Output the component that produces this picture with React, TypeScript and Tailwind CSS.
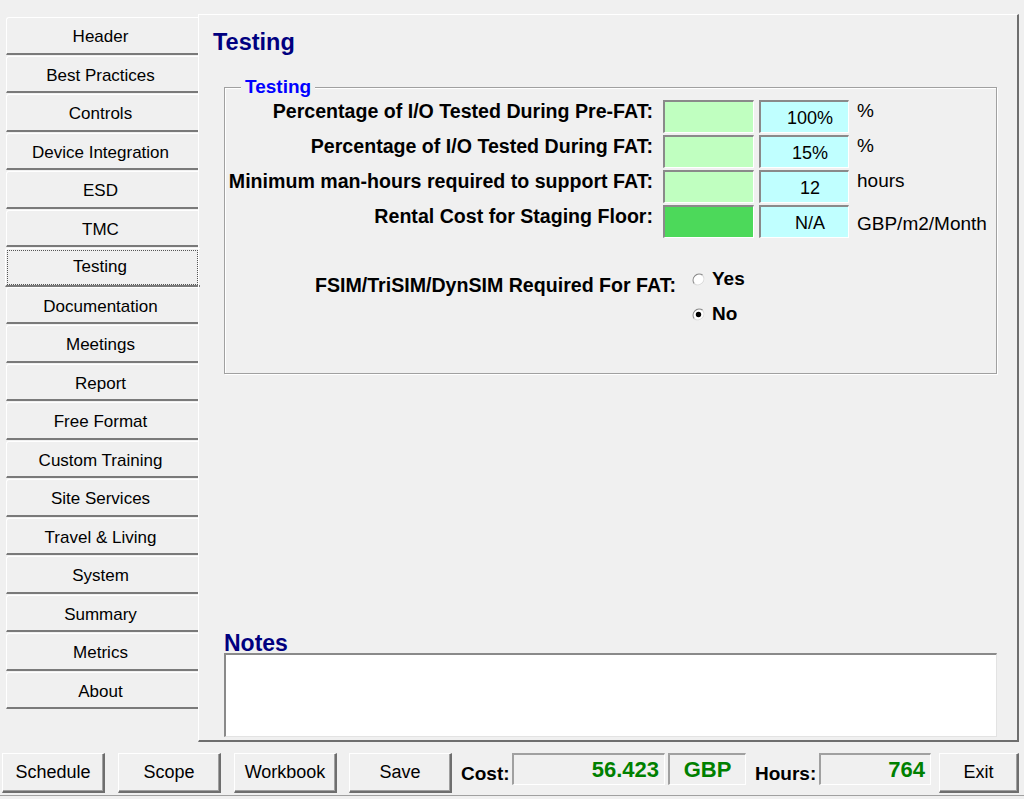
import React from "react";

const tabs = [
  "Header",
  "Best Practices",
  "Controls",
  "Device Integration",
  "ESD",
  "TMC",
  "Testing",
  "Documentation",
  "Meetings",
  "Report",
  "Free Format",
  "Custom Training",
  "Site Services",
  "Travel & Living",
  "System",
  "Summary",
  "Metrics",
  "About",
];

const rows = [
  { label: "Percentage of I/O Tested During Pre-FAT:", dark: false, value: "100%", unit: "%", center: false },
  { label: "Percentage of I/O Tested During FAT:", dark: false, value: "15%", unit: "%", center: false },
  { label: "Minimum man-hours required to support FAT:", dark: false, value: "12", unit: "hours", center: false },
  { label: "Rental Cost for Staging Floor:", dark: true, value: "N/A", unit: "GBP/m2/Month", center: true },
];

function Radio({ checked }: { checked: boolean }) {
  return (
    <svg width="13" height="13" viewBox="0 0 13 13" className="shrink-0">
      <circle cx="6.5" cy="6.5" r="6" fill="#ffffff" />
      <path d="M2.3 10.7 A6 6 0 0 1 10.7 2.3" fill="none" stroke="#8c8c8c" strokeWidth="1.2" />
      <path d="M10.7 2.3 A6 6 0 0 1 2.3 10.7" fill="none" stroke="#dcdcdc" strokeWidth="1.2" />
      {checked && <circle cx="6.5" cy="6.5" r="2.7" fill="#000000" />}
    </svg>
  );
}

function Btn({ label, w, ml }: { label: string; w: string; ml: string }) {
  return (
    <div
      className={`${w} ${ml} h-[40px] shrink-0 flex items-center justify-center border-t border-l border-t-white border-l-white border-r-2 border-b-2 border-r-[#6e6e6e] border-b-[#6e6e6e] bg-[#f0f0f0] text-[18px] text-black shadow-[inset_-1px_-1px_0_#a0a0a0]`}
    >
      {label}
    </div>
  );
}

export default function App() {
  return (
    <div
      className="w-[1024px] h-[799px] bg-[#f0f0f0] flex flex-col overflow-hidden text-black"
      style={{ fontFamily: '"Liberation Sans", Arial, sans-serif' }}
    >
      <div className="flex h-[742px] shrink-0">
        {/* Sidebar */}
        <div className="w-[192px] ml-[6px] pt-[17px] flex flex-col shrink-0">
          {tabs.map((t) => {
            const sel = t === "Testing";
            return (
              <div key={t} className="h-[38.5px] shrink-0 flex flex-col">
                <div
                  className={`flex-1 flex items-center justify-center border-t border-l border-t-white border-l-white rounded-tl-[3px] border-b-2 border-b-[#7a7a7a] text-[17px] ${
                    sel ? "-ml-px mr-[-2px] pt-[1px]" : ""
                  }`}
                >
                  {sel ? (
                    <div className="w-[191px] h-[35px] mr-[2px] border border-dotted border-[#555] flex items-center justify-center pr-[4px] pb-[2px]">
                      {t}
                    </div>
                  ) : (
                    <span className="pt-[3px] pr-[4px]">{t}</span>
                  )}
                </div>
                <div className="h-[1px] shrink-0" />
              </div>
            );
          })}
        </div>

        {/* Main panel */}
        <div className="mt-[14px] w-[821px] h-[728px] shrink-0 flex flex-col border-t border-l border-t-white border-l-white border-r-2 border-b-2 border-r-[#6e6e6e] border-b-[#6e6e6e]">
          <div className="mt-[14px] ml-[14px] h-[26px] leading-[26px] text-[23.5px] font-bold text-[#000080]">
            Testing
          </div>

          <div className="relative mt-[32px] ml-[25px] w-[773px] h-[287px] shrink-0 border border-[#a0a0a0] shadow-[inset_1px_1px_0_#ffffff,1px_1px_0_#ffffff]">
            <div className="absolute left-[16px] top-[-12px] px-[4px] bg-[#f0f0f0] text-[19px] leading-[22px] font-bold text-[#0000ff]">
              Testing
            </div>

            <div className="pt-[12px] flex flex-col gap-[2px]">
              {rows.map((r) => (
                <div key={r.label} className="flex h-[33px] items-start">
                  <div className="w-[428px] shrink-0 text-right text-[19.6px] leading-[22px] font-bold">
                    {r.label}
                  </div>
                  <div
                    className={`ml-[10px] w-[91px] h-[33px] shrink-0 border-t-2 border-l-2 border-t-[#8a8a8a] border-l-[#8a8a8a] border-r border-b border-r-white border-b-white ${
                      r.dark ? "bg-[#4cd95a]" : "bg-[#c0ffc0]"
                    }`}
                  />
                  <div className="ml-[5px] w-[90px] h-[33px] shrink-0 flex items-center justify-center pt-[3px] pl-[11px] border-t-2 border-l-2 border-t-[#8a8a8a] border-l-[#8a8a8a] border-r border-b border-r-white border-b-white bg-[#c0ffff] text-[18px]">
                    {r.value}
                  </div>
                  <div
                    className={`ml-[8px] text-[19px] leading-[22px] ${r.center ? "self-center pt-[4px]" : ""}`}
                  >
                    {r.unit}
                  </div>
                </div>
              ))}
            </div>

            <div className="mt-[30px] flex items-start">
              <div className="w-[451px] shrink-0 mt-[6px] text-right text-[19.6px] leading-[22px] font-bold">
                FSIM/TriSIM/DynSIM Required For FAT:
              </div>
              <div className="ml-[16px] flex flex-col gap-[13px]">
                <div className="flex items-center gap-[7px] h-[22px]">
                  <Radio checked={false} />
                  <span className="text-[19px] leading-[22px] font-bold">Yes</span>
                </div>
                <div className="flex items-center gap-[7px] h-[22px]">
                  <Radio checked={true} />
                  <span className="text-[19px] leading-[22px] font-bold">No</span>
                </div>
              </div>
            </div>
          </div>

          <div className="flex-1" />

          <div className="ml-[25px] h-[20px] leading-[20px] text-[23px] font-bold text-[#000080]">Notes</div>
          <div className="ml-[25px] mb-[3px] w-[773px] h-[84px] shrink-0 bg-white border-t-2 border-l-2 border-t-[#8a8a8a] border-l-[#8a8a8a] border-r border-b border-r-[#e3e3e3] border-b-[#e3e3e3]" />
        </div>
      </div>

      {/* Bottom bar */}
      <div className="mt-[11px] h-[40px] shrink-0 flex items-start">
        <Btn label="Schedule" w="w-[103px]" ml="ml-[2px]" />
        <Btn label="Scope" w="w-[103px]" ml="ml-[13px]" />
        <Btn label="Workbook" w="w-[103px]" ml="ml-[13px]" />
        <Btn label="Save" w="w-[103px]" ml="ml-[12px]" />
        <div className="ml-[9px] mt-[10px] w-[49px] shrink-0 text-[19px] leading-[22px] font-bold">Cost:</div>
        <div className="ml-[2px] w-[153px] h-[32px] shrink-0 flex items-center justify-end pr-[5px] border-t-2 border-l-2 border-t-[#a0a0a0] border-l-[#a0a0a0] border-r border-b border-r-white border-b-white text-[22px] font-bold text-[#008000]">
          56.423
        </div>
        <div className="ml-[3px] w-[78px] h-[32px] shrink-0 flex items-center justify-center border-t-2 border-l-2 border-t-[#a0a0a0] border-l-[#a0a0a0] border-r border-b border-r-white border-b-white text-[22px] font-bold text-[#008000]">
          GBP
        </div>
        <div className="ml-[9px] mt-[10px] w-[61px] shrink-0 text-[19px] leading-[22px] font-bold">Hours:</div>
        <div className="ml-[3px] w-[112px] h-[32px] shrink-0 flex items-center justify-end pr-[5px] border-t-2 border-l-2 border-t-[#a0a0a0] border-l-[#a0a0a0] border-r border-b border-r-white border-b-white text-[22px] font-bold text-[#008000]">
          764
        </div>
        <Btn label="Exit" w="w-[80px]" ml="ml-[8px]" />
      </div>
      <div className="mt-[2px] h-[1px] w-full bg-[#a0a0a0] shrink-0" />
    </div>
  );
}
